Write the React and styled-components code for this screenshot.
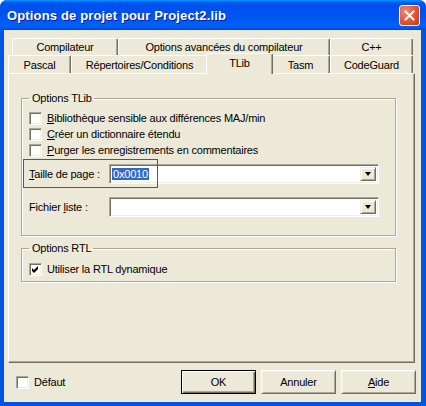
import styled, { createGlobalStyle } from "styled-components";

const GlobalStyle = createGlobalStyle`
  html, body {
    margin: 0;
    padding: 0;
    width: 426px;
    height: 406px;
    overflow: hidden;
    background: #ffffff;
  }
  body {
    font-family: "Liberation Sans", Arial, sans-serif;
    font-size: 11px;
    letter-spacing: -0.2px;
    color: #000;
  }
`;

const FACE = "#ECE9D8";
const SHADOW = "#ACA899";
const DARK = "#716F64";
const LIGHT = "#F1EFE2";

const topTabs = [
  { label: "Compilateur", w: 106 },
  { label: "Options avancées du compilateur", w: 212 },
  { label: "C++", w: 83 },
];

const frontTabs = [
  { label: "Pascal", w: 63 },
  { label: "Répertoires/Conditions", w: 137 },
  { label: "TLib", w: 63, selected: true },
  { label: "Tasm", w: 59 },
  { label: "CodeGuard", w: 83 },
];

export default function App() {
  return (
    <>
      <GlobalStyle />
      <Window>
        <TitleBar>
          <Title>Options de projet pour Project2.lib</Title>
          <CloseButton>
            <svg width="11" height="11" viewBox="0 0 11 11">
              <path d="M1.5 1.5 L9.5 9.5 M9.5 1.5 L1.5 9.5" stroke="#fff" strokeWidth="2" strokeLinecap="square" />
            </svg>
          </CloseButton>
        </TitleBar>

        <Body>
          <TabStrip>
            <TabRow $h={17} $indent={4}>
              {topTabs.map((t) => (
                <Tab key={t.label} $w={t.w}>{t.label}</Tab>
              ))}
            </TabRow>
            <TabRow $h={18} $indent={0}>
              {frontTabs.map((t) => (
                <Tab key={t.label} $w={t.w} $selected={t.selected}>{t.label}</Tab>
              ))}
            </TabRow>
          </TabStrip>

          <Panel>
            <GroupBox>
              <Legend>Options TLib</Legend>
              <CheckRow>
                <CheckBox />
                <span><U>B</U>ibliothèque sensible aux différences MAJ/min</span>
              </CheckRow>
              <CheckRow>
                <CheckBox />
                <span><U>C</U>réer un dictionnaire étendu</span>
              </CheckRow>
              <CheckRow>
                <CheckBox />
                <span><U>P</U>urger les enregistrements en commentaires</span>
              </CheckRow>

              <FieldRow $top={6}>
                <RedMark />
                <FieldLabel><U>T</U>aille de page :</FieldLabel>
                <Combo>
                  <ComboText><Selection>0x0010</Selection></ComboText>
                  <DropButton><Arrow /></DropButton>
                </Combo>
              </FieldRow>

              <FieldRow $top={13}>
                <FieldLabel>Fichier <U>l</U>iste :</FieldLabel>
                <Combo>
                  <ComboText />
                  <DropButton><Arrow /></DropButton>
                </Combo>
              </FieldRow>
            </GroupBox>

            <GroupBox $second>
              <Legend>Options RTL</Legend>
              <CheckRow>
                <CheckBox>
                  <svg width="7" height="7" viewBox="0 0 7 7">
                    <path d="M0 2 L2 4 L6 0 L6 3 L2 7 L0 5 Z" fill="#000" />
                  </svg>
                </CheckBox>
                <span>Utiliser la RTL dynamique</span>
              </CheckRow>
            </GroupBox>
          </Panel>

          <Footer>
            <FooterCheck>
              <CheckBox />
              <span>Défaut</span>
            </FooterCheck>
            <Buttons>
              <PushButton $default>OK</PushButton>
              <PushButton>Annuler</PushButton>
              <PushButton><U>A</U>ide</PushButton>
            </Buttons>
          </Footer>
        </Body>
      </Window>
    </>
  );
}

const Window = styled.div`
  width: 426px;
  height: 406px;
  display: flex;
  flex-direction: column;
  box-sizing: border-box;
  background: #0054e3;
  border-radius: 7px 7px 0 0;
  overflow: hidden;
`;

const TitleBar = styled.div`
  height: 30px;
  flex: none;
  display: flex;
  align-items: center;
  justify-content: space-between;
  padding: 0 7px 0 7px;
  background: linear-gradient(
    to bottom,
    #0997ff 0%,
    #0053ee 10%,
    #0050ee 40%,
    #0060f8 85%,
    #0058f0 94%,
    #003dd7 100%
  );
`;

const Title = styled.div`
  font-family: "Liberation Sans", Arial, sans-serif;
  font-weight: bold;
  font-size: 13px;
  letter-spacing: 0.15px;
  color: #fff;
  text-shadow: 1px 1px 0 #0a1e8c;
  padding-top: 1px;
`;

const CloseButton = styled.div`
  width: 21px;
  height: 21px;
  box-sizing: border-box;
  border: 1px solid #fff;
  border-radius: 3px;
  background: radial-gradient(circle at 30% 30%, #f08a6a 0%, #e0532f 55%, #c2391b 100%);
  display: flex;
  align-items: center;
  justify-content: center;
  margin-right: -1px;
`;

const Body = styled.div`
  flex: 1;
  margin: 0 5px 4px 4px;
  background: ${FACE};
  padding-top: 8px;
  display: flex;
  flex-direction: column;
`;

const TabStrip = styled.div`
  margin-left: 4px;
  display: flex;
  flex-direction: column;
`;

const TabRow = styled.div`
  height: ${(p) => p.$h}px;
  padding-left: ${(p) => p.$indent}px;
  display: flex;
  align-items: flex-end;
`;

const Tab = styled.div`
  position: relative;
  width: ${(p) => p.$w + (p.$selected ? 4 : 0)}px;
  height: ${(p) => (p.$selected ? "calc(100% + 3px)" : "100%")};
  margin: ${(p) => (p.$selected ? "0 -2px -1px -2px" : "0")};
  z-index: ${(p) => (p.$selected ? 2 : 1)};
  box-sizing: border-box;
  background: ${FACE};
  border-top: 1px solid #fff;
  border-left: 1px solid #fff;
  border-right: 1px solid ${DARK};
  box-shadow: inset -1px 0 ${SHADOW};
  border-radius: 2px 2px 0 0;
  display: flex;
  align-items: center;
  justify-content: center;
  padding-bottom: ${(p) => (p.$selected ? 3 : 0)}px;
  white-space: nowrap;
`;

const Panel = styled.div`
  margin: 0 6px 0 4px;
  height: 290px;
  box-sizing: border-box;
  border-top: 1px solid #fff;
  border-left: 1px solid #fff;
  border-right: 1px solid ${DARK};
  border-bottom: 1px solid ${DARK};
  box-shadow: inset -1px -1px ${SHADOW};
  padding: 18px 18px 0 12px;
  display: flex;
  flex-direction: column;
`;

const GroupBox = styled.fieldset`
  margin: ${(p) => (p.$second ? "6px 0 0 0" : "0")};
  padding: ${(p) => (p.$second ? "6px 16px 4px 7px" : "5px 16px 18px 7px")};
  border: 1px solid ${SHADOW};
  box-shadow: inset 1px 1px #fff, 1px 1px #fff;
  min-width: 0;
`;

const Legend = styled.legend`
  padding: 0 2px 0 3px;
  line-height: 13px;
  height: 13px;
`;

const CheckRow = styled.div`
  height: 16px;
  display: flex;
  align-items: center;
  gap: 5px;
  white-space: nowrap;
`;

const CheckBox = styled.span`
  width: 13px;
  height: 13px;
  flex: none;
  box-sizing: border-box;
  background: #fff;
  border-top: 1px solid ${SHADOW};
  border-left: 1px solid ${SHADOW};
  border-bottom: 1px solid #fff;
  border-right: 1px solid #fff;
  box-shadow: inset 1px 1px ${DARK}, inset -1px -1px ${LIGHT};
  display: inline-flex;
  align-items: center;
  justify-content: center;
`;

const U = styled.span`
  text-decoration: underline;
`;

const FieldRow = styled.div`
  position: relative;
  margin-top: ${(p) => p.$top}px;
  display: flex;
  align-items: center;
  height: 20px;
`;

const RedMark = styled.div`
  position: absolute;
  z-index: 3;
  left: -6px;
  top: -5px;
  width: 135px;
  height: 29px;
  box-sizing: border-box;
  border: 1px solid #ff1010;
  pointer-events: none;
`;

const FieldLabel = styled.div`
  width: 80px;
  flex: none;
  white-space: nowrap;
`;

const Combo = styled.div`
  flex: 1;
  height: 20px;
  box-sizing: border-box;
  display: flex;
  background: #fff;
  border-top: 1px solid ${SHADOW};
  border-left: 1px solid ${SHADOW};
  border-bottom: 1px solid #fff;
  border-right: 1px solid #fff;
  box-shadow: inset 1px 1px ${DARK}, inset -1px -1px ${LIGHT};
  padding: 2px;
`;

const ComboText = styled.div`
  flex: 1;
  display: flex;
  align-items: center;
`;

const Selection = styled.span`
  background: #316ac5;
  color: #fff;
  line-height: 12px;
  padding: 0 1px;
`;

const DropButton = styled.div`
  width: 16px;
  flex: none;
  box-sizing: border-box;
  background: ${FACE};
  border-top: 1px solid ${LIGHT};
  border-left: 1px solid ${LIGHT};
  border-bottom: 1px solid ${DARK};
  border-right: 1px solid ${DARK};
  box-shadow: inset 1px 1px #fff, inset -1px -1px ${SHADOW};
  display: flex;
  align-items: center;
  justify-content: center;
`;

const Arrow = styled.span`
  width: 0;
  height: 0;
  border-left: 3.5px solid transparent;
  border-right: 3.5px solid transparent;
  border-top: 4px solid #000;
`;

const Footer = styled.div`
  margin-top: 7px;
  height: 24px;
  padding: 0 5px 0 12px;
  display: flex;
  align-items: center;
  justify-content: space-between;
`;

const FooterCheck = styled.div`
  display: flex;
  align-items: center;
  gap: 5px;
`;

const Buttons = styled.div`
  display: flex;
  gap: 5px;
`;

const PushButton = styled.div`
  width: 75px;
  height: 24px;
  box-sizing: border-box;
  display: flex;
  align-items: center;
  justify-content: center;
  background: ${FACE};
  border: 1px solid ${(p) => (p.$default ? "#000" : "transparent")};
  border-top-color: ${(p) => (p.$default ? "#000" : "#fff")};
  border-left-color: ${(p) => (p.$default ? "#000" : "#fff")};
  border-right-color: ${(p) => (p.$default ? "#000" : DARK)};
  border-bottom-color: ${(p) => (p.$default ? "#000" : DARK)};
  box-shadow: ${(p) =>
    p.$default
      ? `inset 1px 1px #fff, inset -1px -1px ${DARK}, inset -2px -2px ${SHADOW}`
      : `inset 1px 1px ${LIGHT}, inset -1px -1px ${SHADOW}`};
`;
